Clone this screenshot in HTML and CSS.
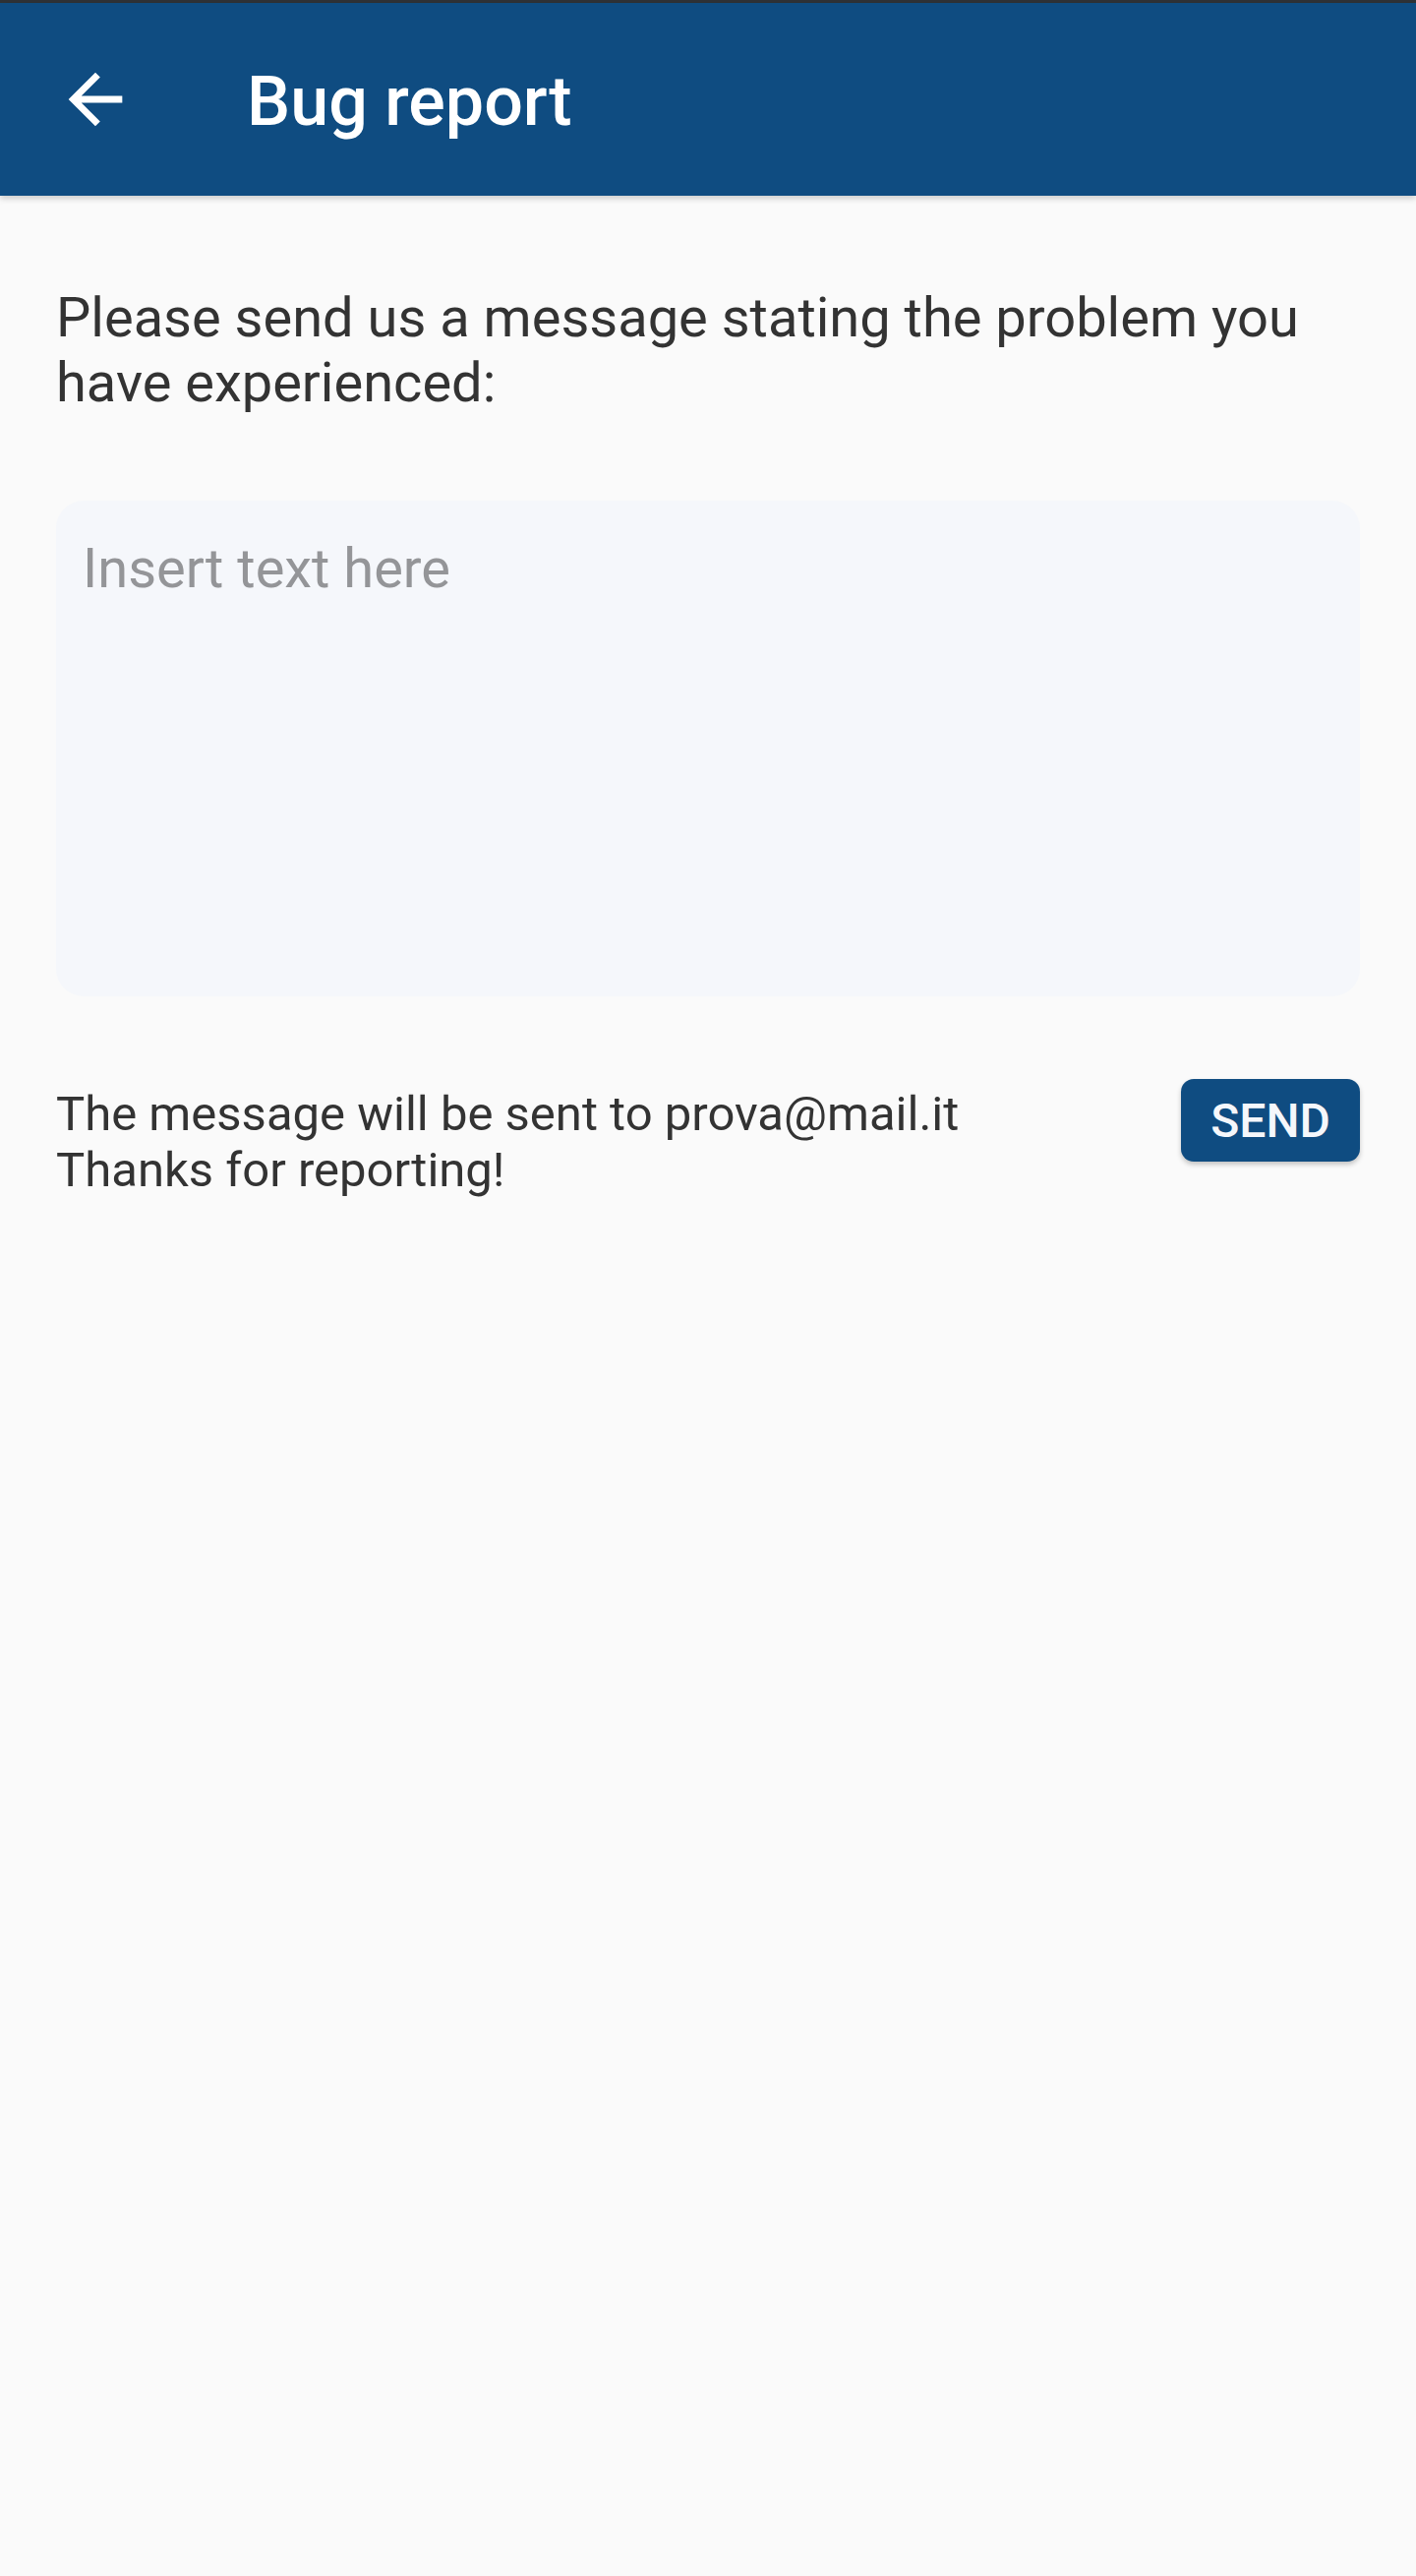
FILE: index.html
```html
<!DOCTYPE html>
<html lang="en">
<head>
<meta charset="utf-8">
<title>Bug report</title>
<link rel="stylesheet" href="styles.css">
</head>
<body>
<div class="status-strip"></div>
<header class="appbar">
  <button class="back" aria-label="Back">
    <svg viewBox="0 0 24 24" width="82" height="82"><path fill="#ffffff" d="M20 11H7.83l5.59-5.59L12 4l-8 8 8 8 1.41-1.41L7.83 13H20v-2z"/></svg>
  </button>
  <h1 class="title">Bug report</h1>
</header>
<main class="content">
  <p class="intro">Please send us a message stating the problem you have experienced:</p>
  <div class="input-box"><span class="placeholder">Insert text here</span></div>
  <div class="footer-row">
    <p class="note">The message will be sent to prova@mail.it<br>Thanks for reporting!</p>
    <button class="send">SEND</button>
  </div>
</main>
</body>
</html>
```
FILE: styles.css
```css
* { box-sizing: border-box; }
html, body { margin: 0; padding: 0; }
body {
  background: #fafafa;
  font-family: Roboto, "Noto Sans", sans-serif;
  color: #333333;
  min-height: 2619px;
}
.status-strip {
  height: 3px;
  background: #2f3236;
}
.appbar {
  height: 196px;
  background: #0f4c81;
  display: flex;
  align-items: center;
  box-shadow: 0 3px 6px rgba(0,0,0,0.18);
  position: relative;
}
.back {
  margin-left: 56px;
  width: 82px;
  height: 82px;
  padding: 0;
  border: 0;
  background: transparent;
  display: flex;
}
.title {
  margin: 4px 0 0 113px;
  font-size: 70px;
  font-weight: 500;
  color: #ffffff;
  line-height: 1;
}
.content {
  padding: 91px 57px 0 57px;
}
.intro {
  margin: 0;
  font-size: 56px;
  line-height: 66px;
  color: #333333;
}
.input-box {
  margin-top: 87px;
  height: 504px;
  background: #f5f7fb;
  border-radius: 28px;
  padding: 36px 27px;
}
.placeholder {
  font-size: 56px;
  line-height: 66px;
  color: #949598;
}
.footer-row {
  margin-top: 84px;
  display: flex;
  justify-content: space-between;
  align-items: flex-start;
}
.note {
  margin: 7px 0 0 0;
  font-size: 49px;
  line-height: 57px;
  color: #333333;
}
.send {
  width: 182px;
  height: 84px;
  border: 0;
  border-radius: 13px;
  background: #0f4c81;
  color: #f5f7fb;
  font-family: Roboto, sans-serif;
  font-size: 48px;
  font-weight: 500;
  padding: 0;
  box-shadow: 0 3px 5px rgba(0,0,0,0.22);
}
```
